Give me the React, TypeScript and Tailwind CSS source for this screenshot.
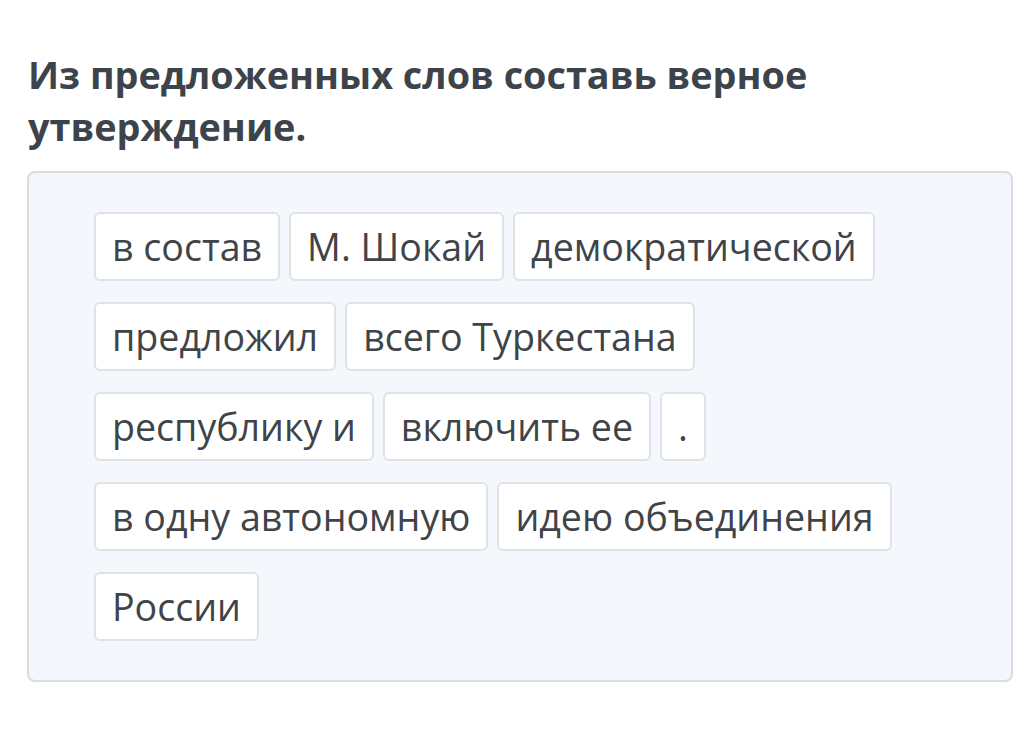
const words = [
  "в состав",
  "М. Шокай",
  "демократической",
  "предложил",
  "всего Туркестана",
  "республику и",
  "включить ее",
  ".",
  "в одну автономную",
  "идею объединения",
  "России",
];

function WordChip({ text }: { text: string }) {
  return (
    <div className="h-[69px] flex items-center px-[16px] bg-white border-2 border-[#dfe3e7] rounded-[6px] text-[37.6px] leading-none text-[#3f4448] whitespace-nowrap">
      {text}
    </div>
  );
}

export default function App() {
  return (
    <div
      className="w-[1030px] h-[747px] bg-white pt-[49px] pl-[28px] pr-[17px]"
      style={{ fontFamily: '"Open Sans", "Noto Sans", sans-serif' }}
    >
      <h1 className="text-[37.8px] leading-[52px] font-bold text-[#3d434b] pr-[150px]">
        Из предложенных слов составь верное утверждение.
      </h1>
      <div className="mt-[18px] -ml-[1px] w-[986px] h-[511px] bg-[#f4f8fc] border-2 border-[#d8dde2] rounded-[8px] pt-[39px] pl-[65px] pr-[65px]">
        <div className="flex flex-wrap gap-x-[9px] gap-y-[21px]">
          {words.map((w) => (
            <WordChip key={w} text={w} />
          ))}
        </div>
      </div>
    </div>
  );
}
